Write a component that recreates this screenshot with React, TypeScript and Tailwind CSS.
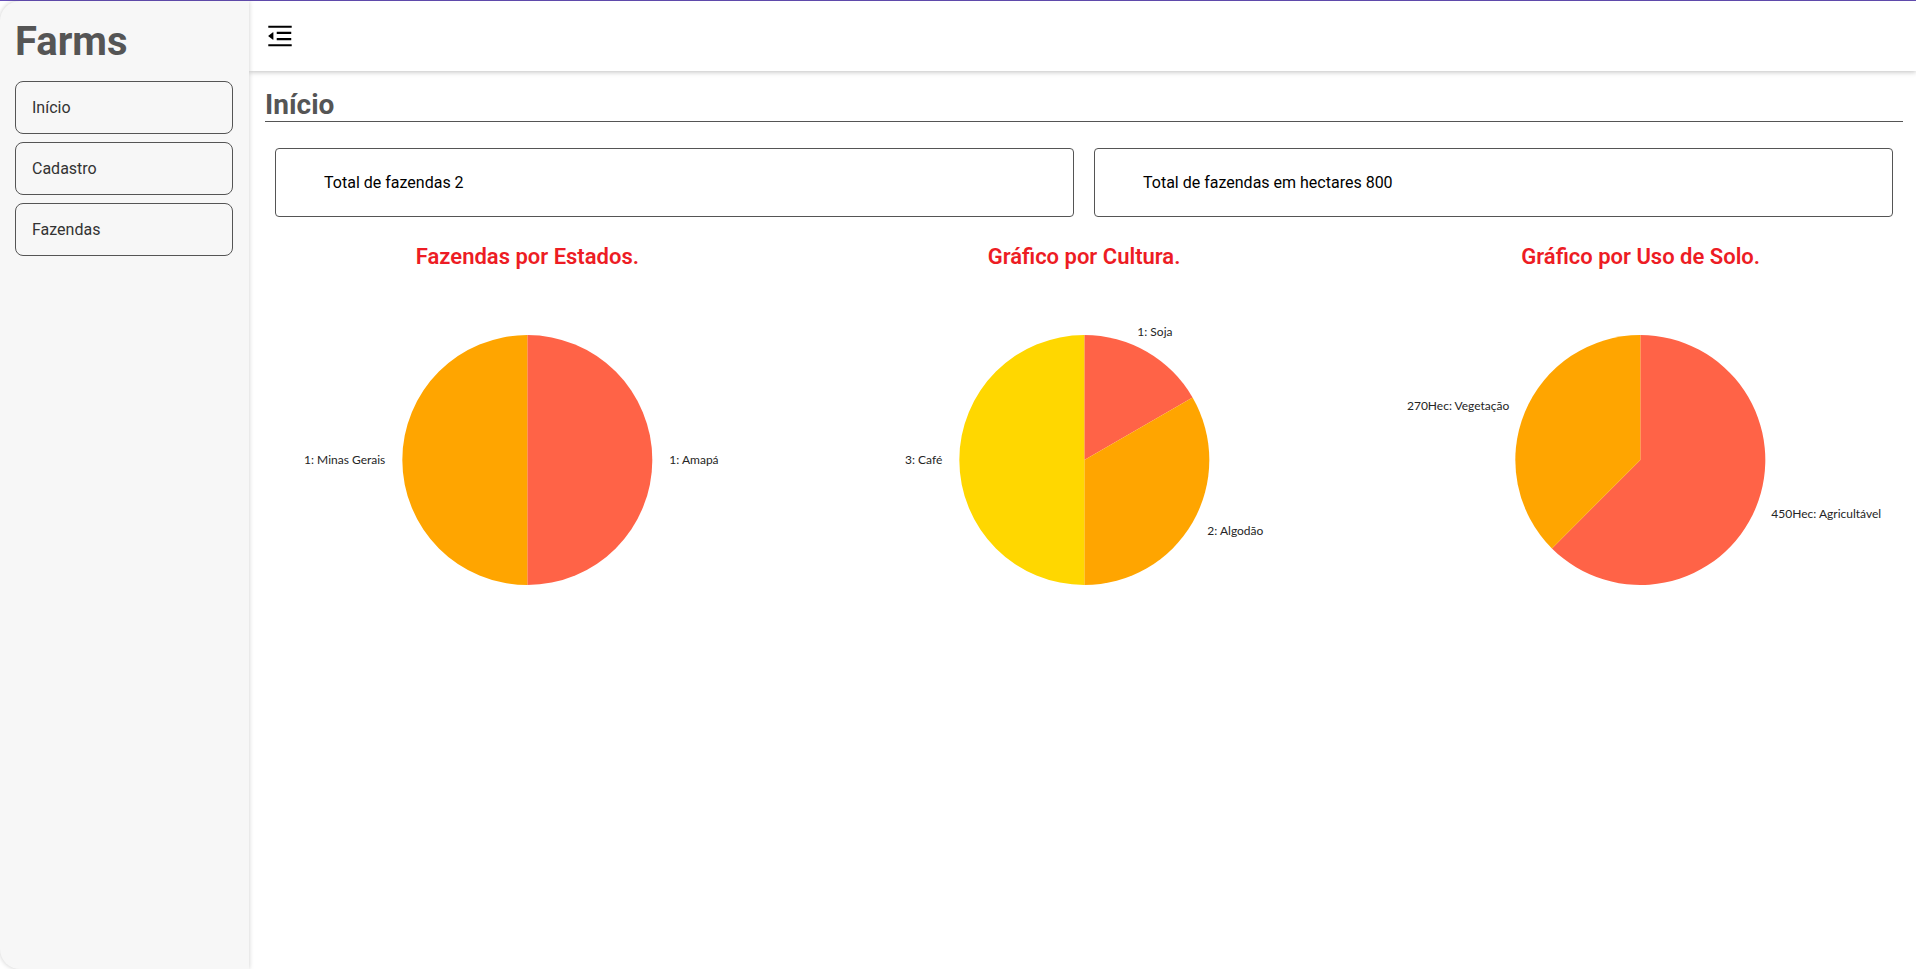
import { AiOutlineMenuFold } from "react-icons/ai";

type Slice = {
  value: number;
  color: string;
  label: string;
  x: number;
  y: number;
  anchor: "start" | "end";
};

type Chart = { title: string; slices: Slice[] };

const RADIUS = 125;

const charts: Chart[] = [
  {
    title: "Fazendas por Estados.",
    slices: [
      { value: 1, color: "tomato", label: "1: Amapá", x: 142, y: 4, anchor: "start" },
      { value: 1, color: "orange", label: "1: Minas Gerais", x: -142, y: 4, anchor: "end" },
    ],
  },
  {
    title: "Gráfico por Cultura.",
    slices: [
      { value: 1, color: "tomato", label: "1: Soja", x: 53, y: -124, anchor: "start" },
      { value: 2, color: "orange", label: "2: Algodão", x: 123, y: 75, anchor: "start" },
      { value: 3, color: "gold", label: "3: Café", x: -142, y: 4, anchor: "end" },
    ],
  },
  {
    title: "Gráfico por Uso de Solo.",
    slices: [
      { value: 450, color: "tomato", label: "450Hec: Agricultável", x: 131, y: 58, anchor: "start" },
      { value: 270, color: "orange", label: "270Hec: Vegetação", x: -131, y: -50, anchor: "end" },
    ],
  },
];

const links = ["Início", "Cadastro", "Fazendas"];

const totals = ["Total de fazendas 2", "Total de fazendas em hectares 800"];

function slicePath(start: number, end: number) {
  const point = (t: number) => {
    const angle = t * 2 * Math.PI;
    return `${RADIUS * Math.sin(angle)} ${-RADIUS * Math.cos(angle)}`;
  };
  const large = end - start > 0.5 ? 1 : 0;
  return `M0 0L${point(start)}A${RADIUS} ${RADIUS} 0 ${large} 1 ${point(end)}Z`;
}

function PieChart({ title, slices }: Chart) {
  const total = slices.reduce((sum, slice) => sum + slice.value, 0);
  let position = 0;
  return (
    <figure className="flex min-w-0 flex-col items-center">
      <figcaption className="text-[22px] leading-7 font-semibold text-[#ed1c24]">{title}</figcaption>
      <svg viewBox="-278 -189 556 378" className="h-[378px] w-full" role="img" aria-label={title}>
        {slices.map((slice) => {
          const start = position;
          position += slice.value / total;
          return <path key={slice.label} d={slicePath(start, position)} fill={slice.color} />;
        })}
        {slices.map((slice) => (
          <text
            key={slice.label}
            x={slice.x}
            y={slice.y}
            textAnchor={slice.anchor}
            className="fill-[#252525] font-[Lato,sans-serif] text-[12px]"
          >
            {slice.label}
          </text>
        ))}
      </svg>
    </figure>
  );
}

export default function App() {
  return (
    <div className="flex min-h-screen border-t border-[#6750b8] bg-white font-[Roboto,sans-serif] text-black">
      <aside className="relative z-10 w-[13%] shrink-0 rounded-l-[20px] bg-[#f7f7f7] pt-[17px] pr-4 pl-[15px] shadow-[0_0_5px_rgba(0,0,0,0.2)]">
        <h1 className="text-[40px] leading-12 font-bold text-[#555555]">Farms</h1>
        <nav className="mt-[15px] flex flex-col gap-2">
          {links.map((link) => (
            <a
              key={link}
              href="#"
              className="rounded-lg border border-[#555555] px-4 py-[14px] text-base leading-[23px] text-[#333333]"
            >
              {link}
            </a>
          ))}
        </nav>
      </aside>
      <div className="flex min-w-0 flex-1 flex-col">
        <header className="flex h-[70px] items-center px-4 shadow-[0_1px_5px_rgba(0,0,0,0.25)]">
          <button type="button" aria-label="Recolher menu" className="text-[30px]">
            <AiOutlineMenuFold />
          </button>
        </header>
        <main className="overflow-x-hidden pt-[18px] pr-[13px] pl-4">
          <h2 className="border-b border-[#555555] text-[28px] leading-8 font-bold text-[#555555]">Início</h2>
          <section className="mt-4 grid grid-cols-2">
            {totals.map((total) => (
              <p key={total} className="m-[10px] rounded border border-[#555555] px-12 py-[22px] leading-[23px]">
                {total}
              </p>
            ))}
          </section>
          <section className="-mx-4 mt-4 grid grid-cols-3">
            {charts.map((chart) => (
              <PieChart key={chart.title} {...chart} />
            ))}
          </section>
        </main>
      </div>
    </div>
  );
}
